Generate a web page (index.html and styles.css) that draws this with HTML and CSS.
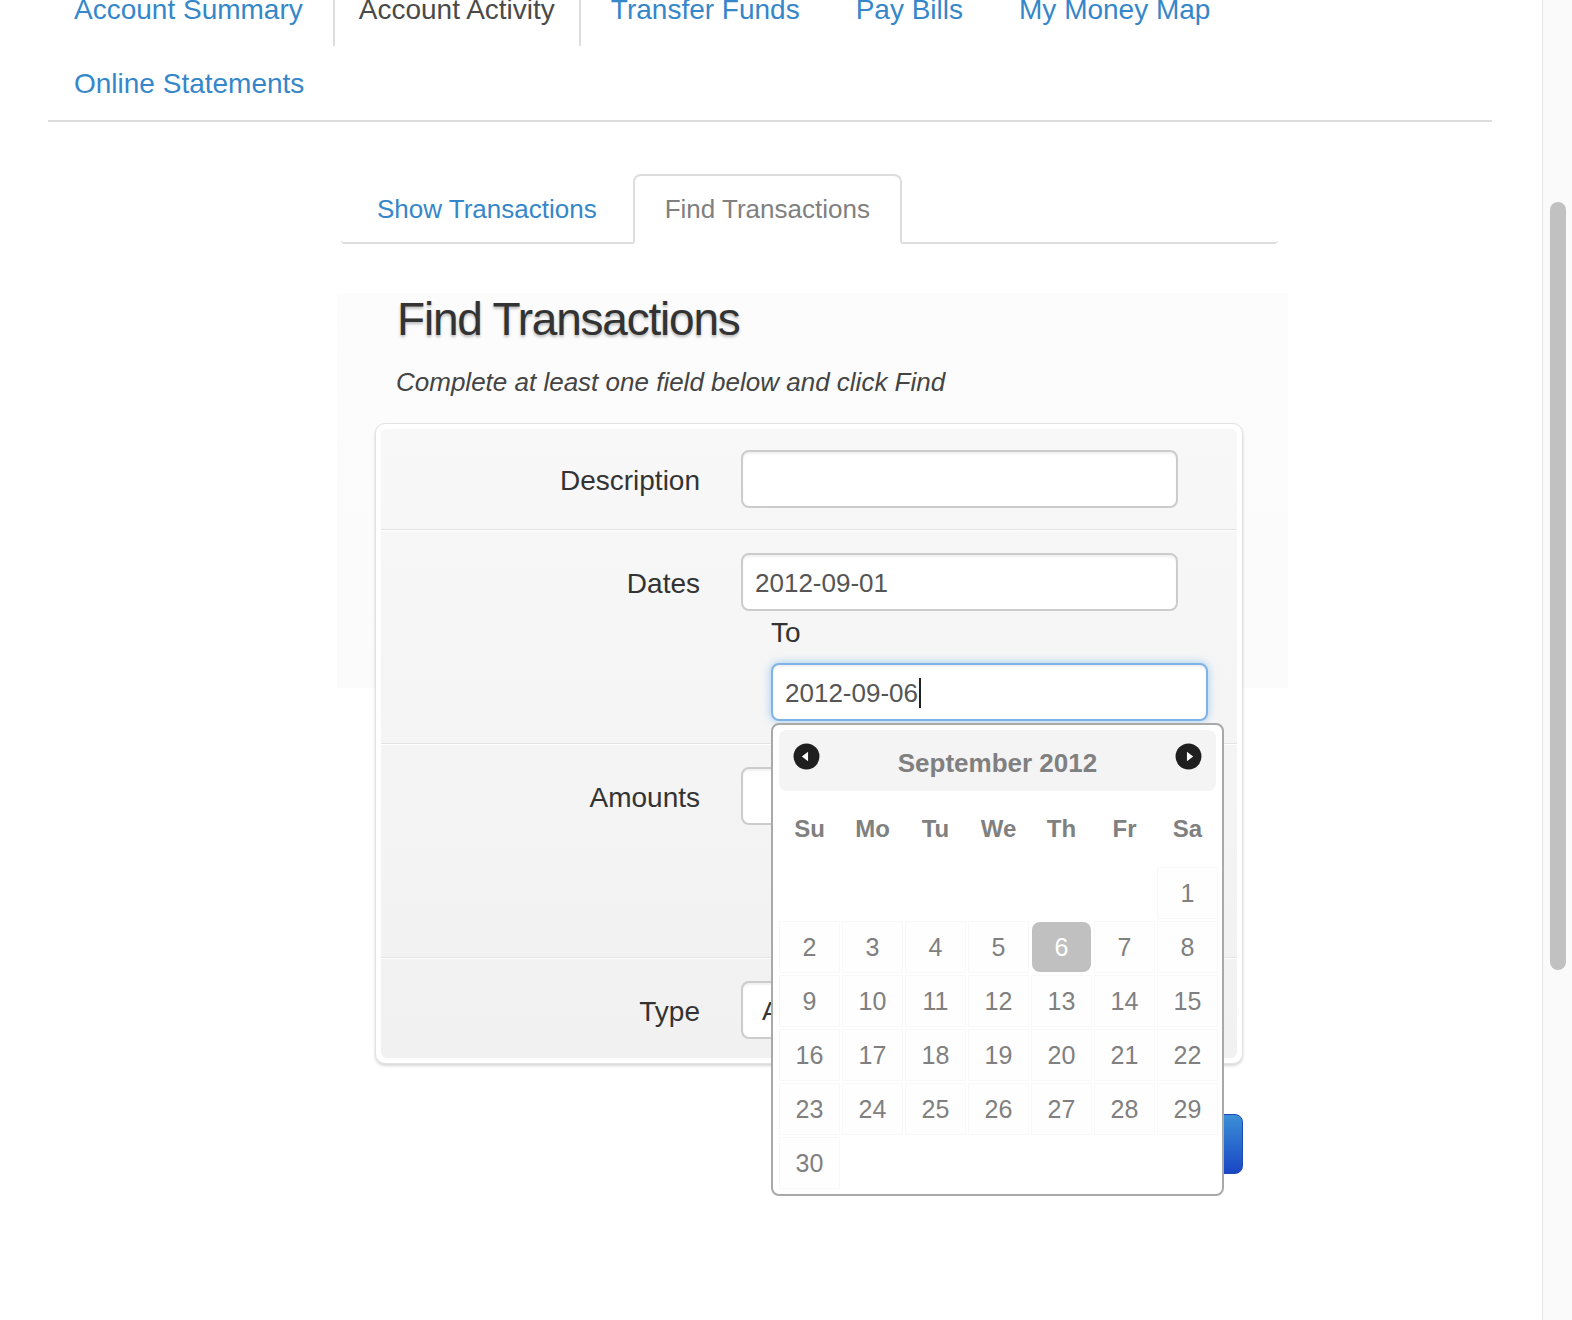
FILE: index.html
```html
<!DOCTYPE html>
<html lang="en">
<head>
<meta charset="utf-8">
<title>Find Transactions</title>
<link rel="stylesheet" href="styles.css">
</head>
<body>
<div class="window">
  <div class="page">
    <div class="container">
      <ul class="main-nav">
        <li><a href="#">Account Summary</a></li>
        <li class="active"><a href="#">Account Activity</a></li>
        <li><a href="#">Transfer Funds</a></li>
        <li><a href="#">Pay Bills</a></li>
        <li><a href="#">My Money Map</a></li>
        <li><a href="#">Online Statements</a></li>
      </ul>

      <div class="content">
        <ul class="tabs">
          <li><a href="#">Show Transactions</a></li>
          <li class="active"><a href="#">Find Transactions</a></li>
        </ul>

        <div class="well">
          <h2 class="title">Find Transactions</h2>
          <p class="subtitle">Complete at least one field below and click Find</p>

          <div class="card">
            <div class="rows">
              <div class="row row-first">
                <div class="label">Description</div>
                <div class="controls">
                  <div class="field"></div>
                </div>
              </div>

              <div class="row">
                <div class="label">Dates</div>
                <div class="controls">
                  <div class="field">2012-09-01</div>
                  <div class="to-wrap">
                    <div class="to">To</div>
                    <div class="field focus">2012-09-06<span class="caret"></span></div>
                    <div class="datepicker">
                      <div class="dp-header">
                        <svg class="dp-nav" width="27" height="27" viewBox="0 0 26 26"><circle cx="13" cy="13" r="12.5" fill="#1f1f1f"/><path d="M8.5 13 L14.5 8.5 L14.5 17.5 Z" fill="#fff"/></svg>
                        <span class="dp-title">September 2012</span>
                        <svg class="dp-nav" width="27" height="27" viewBox="0 0 26 26"><circle cx="13" cy="13" r="12.5" fill="#1f1f1f"/><path d="M17.5 13 L11.5 8.5 L11.5 17.5 Z" fill="#fff"/></svg>
                      </div>
                      <div class="dp-dow">
                        <span>Su</span><span>Mo</span><span>Tu</span><span>We</span><span>Th</span><span>Fr</span><span>Sa</span>
                      </div>
                      <div class="dp-days">
                        <span class="empty"></span><span class="empty"></span><span class="empty"></span><span class="empty"></span><span class="empty"></span><span class="empty"></span><span>1</span>
                        <span>2</span><span>3</span><span>4</span><span>5</span><span class="selected">6</span><span>7</span><span>8</span>
                        <span>9</span><span>10</span><span>11</span><span>12</span><span>13</span><span>14</span><span>15</span>
                        <span>16</span><span>17</span><span>18</span><span>19</span><span>20</span><span>21</span><span>22</span>
                        <span>23</span><span>24</span><span>25</span><span>26</span><span>27</span><span>28</span><span>29</span>
                        <span>30</span>
                      </div>
                    </div>
                  </div>
                </div>
              </div>

              <div class="row">
                <div class="label">Amounts</div>
                <div class="controls">
                  <div class="field"></div>
                  <div class="to-wrap">
                    <div class="to">To</div>
                    <div class="field"></div>
                  </div>
                </div>
              </div>

              <div class="row row-last">
                <div class="label">Type</div>
                <div class="controls">
                  <div class="field select">Any</div>
                </div>
              </div>
            </div>
          </div>

          <div class="actions">
            <button class="btn-find" type="button">Find</button>
          </div>
        </div>
      </div>
    </div>
  </div>
  <div class="scrollbar"><div class="thumb"></div></div>
</div>
</body>
</html>
```

FILE: styles.css
```css
html, body {
  margin: 0;
  padding: 0;
  height: 100%;
  overflow: hidden;
  background: #fff;
}

body {
  font-family: "Liberation Sans", Arial, Helvetica, sans-serif;
  color: #333;
}

.window {
  display: flex;
  height: 1320px;
  overflow: hidden;
}

.page {
  flex: 1;
  min-width: 0;
  overflow: hidden;
}

.scrollbar {
  width: 29px;
  border-left: 1px solid #e6e6e6;
  background: #fafafa;
  display: flex;
  flex-direction: column;
}

.thumb {
  margin: 202px 0 0 7px;
  width: 16px;
  height: 768px;
  border-radius: 8px;
  background: #c1c1c1;
}

.container {
  width: 1444px;
  margin-left: 48px;
}

/* Main navigation */
.main-nav {
  list-style: none;
  margin: -28px 0 0 0;
  padding: 0;
  display: flex;
  flex-wrap: wrap;
  border-bottom: 2px solid #ddd;
}

.main-nav li {
  margin-right: 4px;
}

.main-nav a {
  display: block;
  padding: 22px 24px 20px;
  line-height: 32px;
  font-size: 28px;
  color: #3587c9;
  text-decoration: none;
  border-left: 2px solid transparent;
  border-right: 2px solid transparent;
}

.main-nav li.active a {
  color: #4a4a4a;
  border-left-color: #ddd;
  border-right-color: #ddd;
}

/* Content column */
.content {
  margin-left: 289px;
  width: 951px;
}

.tabs {
  list-style: none;
  margin: 52px 10px 0 4px;
  padding: 0;
  display: flex;
  border-bottom: 2px solid #ddd;
  border-radius: 0 0 4px 4px;
}

.tabs li {
  margin-right: 4px;
  margin-bottom: -2px;
}

.tabs li:first-child {
  margin-left: 4px;
}

.tabs a {
  display: block;
  padding: 17px 30px;
  line-height: 32px;
  font-size: 26px;
  color: #3587c9;
  text-decoration: none;
  border: 2px solid transparent;
  border-radius: 8px 8px 0 0;
}

.tabs li.active a {
  color: #808080;
  background: #fff;
  border-color: #ddd #ddd #fff;
}

.well {
  margin-top: 49px;
  background: linear-gradient(#fcfcfc, #fbfbfb) no-repeat;
  background-size: 100% 395px;
  padding-bottom: 40px;
}

.title {
  margin: 0;
  padding-left: 60px;
  font-size: 46px;
  line-height: 52px;
  font-weight: normal;
  letter-spacing: -1.2px;
  color: #333;
  text-shadow: 0 2px 3px rgba(0, 0, 0, 0.28);
}

.subtitle {
  margin: 21px 0 0 0;
  padding-left: 59px;
  font-size: 26px;
  line-height: 32px;
  font-style: italic;
  color: #444;
}

/* Form card */
.card {
  margin: 25px 0 0 38px;
  width: 856px;
  padding: 5px;
  background: #fff;
  border: 1px solid #e2e2e2;
  border-radius: 10px;
  box-shadow: 0 2px 3px rgba(0, 0, 0, 0.16);
}

.rows {
  border-radius: 6px;
  background: linear-gradient(#f8f8f8, #f1f1f1);
}

.row {
  display: grid;
  grid-template-columns: 319px 1fr;
  column-gap: 41px;
  align-items: start;
  padding: 22px 0;
  border-top: 1px solid #fff;
  border-bottom: 1px solid #e3e3e3;
}

.row-first {
  padding-top: 21px;
  padding-bottom: 21px;
  border-top: 0;
}

.row-last {
  padding-bottom: 19px;
  border-bottom: 0;
}

.label {
  text-align: right;
  font-size: 28px;
  line-height: 58px;
  padding-top: 2px;
  margin-bottom: -2px;
  color: #333;
}

.controls {
  position: relative;
}

.field {
  box-sizing: border-box;
  width: 437px;
  height: 58px;
  padding: 0 12px;
  border: 2px solid #ccc;
  border-radius: 8px;
  background: #fff;
  box-shadow: inset 0 2px 2px rgba(0, 0, 0, 0.06);
  font-size: 26px;
  line-height: 56px;
  color: #555;
  white-space: nowrap;
  overflow: hidden;
}

.field.select {
  padding-left: 19px;
  color: #333;
}

.field.focus {
  border-color: #7fb3e8;
  box-shadow: inset 0 2px 2px rgba(0, 0, 0, 0.06), 0 0 8px rgba(82, 168, 236, 0.55);
}

.caret {
  display: inline-block;
  width: 2px;
  height: 30px;
  margin-left: 1px;
  vertical-align: -6px;
  background: #222;
}

.to-wrap {
  position: relative;
  margin-left: 30px;
}

.to {
  margin-top: 6px;
  margin-bottom: 14px;
  font-size: 28px;
  line-height: 32px;
  color: #333;
}

/* Datepicker */
.datepicker {
  position: absolute;
  z-index: 10;
  top: calc(100% + 2px);
  left: 0;
  box-sizing: border-box;
  width: 453px;
  padding: 5px 6px 6px 6px;
  background: #fff;
  border: 2px solid #a9a9a9;
  border-radius: 8px;
  color: #808080;
}

.dp-header {
  display: flex;
  align-items: flex-start;
  height: 61px;
  box-sizing: border-box;
  padding: 13px 14px 0 14px;
  background: #f4f4f4;
  border-radius: 8px;
}

.dp-nav {
  flex: none;
  display: block;
}

.dp-title {
  flex: 1;
  text-align: center;
  font-weight: bold;
  font-size: 26px;
  line-height: 32px;
  margin-top: 4px;
  color: #808080;
}

.dp-dow,
.dp-days {
  display: grid;
  grid-template-columns: repeat(7, 59px);
  column-gap: 4px;
  margin-left: 1px;
}

.dp-dow {
  margin-top: 13px;
}

.dp-dow span {
  text-align: center;
  font-weight: bold;
  font-size: 24px;
  line-height: 50px;
  color: #808080;
}

.dp-days {
  margin-top: 14px;
  row-gap: 4px;
}

.dp-days span {
  height: 50px;
  text-align: center;
  font-size: 25px;
  line-height: 50px;
  color: #808080;
  background: #fefefe;
  box-shadow: 0 0 0 1px #f8f8f8;
}

.dp-days span.empty {
  background: transparent;
  box-shadow: none;
}

.dp-days span.selected {
  background: #c0c0c0;
  color: #fff;
  border-radius: 8px;
  box-shadow: none;
}

/* Find button */
.actions {
  display: flex;
  justify-content: flex-end;
  width: 868px;
  margin: 50px 0 0 38px;
}

.btn-find {
  width: 110px;
  height: 60px;
  border: 1px solid #1c4bb7;
  border-radius: 8px;
  background: linear-gradient(#3a8fd6, #1a46c4);
  color: #fff;
  font-family: "Liberation Sans", Arial, sans-serif;
  font-size: 26px;
}
```
